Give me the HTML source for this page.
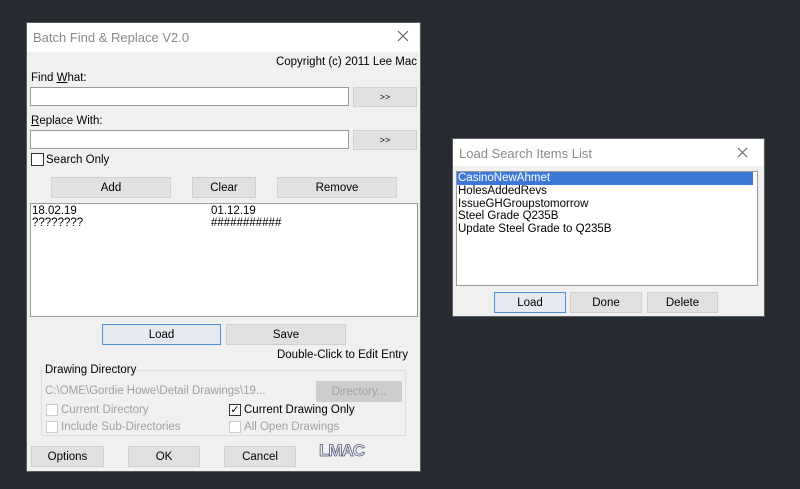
<!DOCTYPE html><html><head><style>
body{margin:0;width:800px;height:489px;background:#262a31;position:relative;overflow:hidden;font-family:"Liberation Sans",sans-serif;font-size:11.5px;color:#000}
.a{position:absolute}
.dlg{background:#f0f0f0;border:1px solid #5a5d62}
.tb{background:#fff;color:#8a8a8a;font-size:13px}
.btn{position:absolute;background:#e1e1e1;border:1px solid #d0d0d0;box-sizing:border-box;text-align:center;font-size:11.5px;display:flex;align-items:center;justify-content:center}
.btn.f{border:1px solid #4a90d9;background:#e5eaf0}
.in{position:absolute;background:#fff;border:1px solid #9a9a9a;box-sizing:border-box}
.cb{position:absolute;width:12px;height:12px;background:#fff;border:1px solid #333;box-sizing:border-box}
.cb.d{border-color:#ccc}
.g{color:#a0a0a0}
</style></head><body>
<div class="a dlg" style="left:26px;top:22px;width:393px;height:448px"></div>
<div class="a tb" style="left:27px;top:23px;width:392px;height:29px"></div>
<div class="a" style="left:33px;top:30px;font-size:13px;color:#8a8a8a">Batch Find &amp; Replace V2.0</div>
<svg class="a" style="left:397px;top:30px" width="12" height="12"><path d="M1 1L11 11M11 1L1 11" stroke="#666" stroke-width="1.2"/></svg>
<div class="a" style="right:383px;top:56px">Copyright (c) 2011 Lee Mac</div>
<div class="a" style="left:31px;top:72px">Find <u>W</u>hat:</div>
<div class="in" style="left:30px;top:87px;width:319px;height:19px"></div>
<div class="btn" style="left:353px;top:87px;width:64px;height:20px;font-size:9px">&gt;&gt;</div>
<div class="a" style="left:31px;top:115px"><u>R</u>eplace With:</div>
<div class="in" style="left:30px;top:130px;width:319px;height:19px"></div>
<div class="btn" style="left:353px;top:130px;width:64px;height:20px;font-size:9px">&gt;&gt;</div>
<div class="cb" style="left:31px;top:153px;width:13px;height:13px"></div>
<div class="a" style="left:46px;top:154px">Search Only</div>
<div class="btn" style="left:51px;top:177px;width:120px;height:21px">Add</div>
<div class="btn" style="left:192px;top:177px;width:64px;height:21px">Clear</div>
<div class="btn" style="left:277px;top:177px;width:120px;height:21px">Remove</div>
<div class="in" style="left:30px;top:203px;width:388px;height:114px"></div>
<div class="a" style="left:32px;top:205px">18.02.19</div>
<div class="a" style="left:211px;top:205px">01.12.19</div>
<div class="a" style="left:32px;top:217px">????????</div>
<div class="a" style="left:211px;top:217px">###########</div>
<div class="btn f" style="left:102px;top:324px;width:119px;height:21px">Load</div>
<div class="btn" style="left:226px;top:324px;width:120px;height:21px">Save</div>
<div class="a" style="right:392px;top:349px">Double-Click to Edit Entry</div>
<div class="a" style="left:41px;top:370px;width:365px;height:66px;border:1px solid #dcdcdc;box-sizing:border-box"></div>
<div class="a" style="left:44px;top:364px;background:#f0f0f0;padding:0 1px">Drawing Directory</div>
<div class="a g" style="left:45px;top:385px">C:\OME\Gordie Howe\Detail Drawings\19...</div>
<div class="btn g" style="left:316px;top:381px;width:86px;height:21px;background:#cdcdcd;border-color:#cdcdcd">Directory...</div>
<div class="cb d" style="left:46px;top:404px"></div><div class="a g" style="left:61px;top:404px">Current Directory</div>
<div class="cb" style="left:229px;top:404px;font-size:11px;line-height:10px;text-align:center">✓</div><div class="a" style="left:244px;top:404px">Current Drawing Only</div>
<div class="cb d" style="left:46px;top:421px"></div><div class="a g" style="left:61px;top:421px">Include Sub-Directories</div>
<div class="cb d" style="left:229px;top:421px"></div><div class="a g" style="left:244px;top:421px">All Open Drawings</div>
<div class="btn" style="left:31px;top:446px;width:73px;height:21px">Options</div>
<div class="btn" style="left:128px;top:446px;width:72px;height:21px">OK</div>
<div class="btn" style="left:224px;top:446px;width:72px;height:21px">Cancel</div>
<svg class="a" style="left:318px;top:440px" width="54" height="20"><text x="1" y="16" font-family="Liberation Sans" font-size="17" font-weight="bold" fill="#f0f0f0" stroke="#555a80" stroke-width="0.8" letter-spacing="-1">LMAC</text></svg>

<div class="a dlg" style="left:452px;top:138px;width:311px;height:177px"></div>
<div class="a tb" style="left:453px;top:139px;width:310px;height:27px"></div>
<div class="a" style="left:459px;top:146px;font-size:13px;color:#8a8a8a">Load Search Items List</div>
<svg class="a" style="left:737px;top:147px" width="11" height="11"><path d="M1 1L10 10M10 1L1 10" stroke="#666" stroke-width="1.2"/></svg>
<div class="in" style="left:456px;top:171px;width:302px;height:115px"></div>
<div class="a" style="left:457px;top:172px;width:296px;height:13px;background:#3c78d8"></div>
<div class="a" style="left:458px;top:172px;color:#fff;line-height:13px">CasinoNewAhmet</div>
<div class="a" style="left:458px;top:185px;line-height:12.5px">HolesAddedRevs<br>IssueGHGroupstomorrow<br>Steel Grade Q235B<br>Update Steel Grade to Q235B</div>
<div class="btn f" style="left:494px;top:292px;width:72px;height:21px">Load</div>
<div class="btn" style="left:570px;top:292px;width:72px;height:21px">Done</div>
<div class="btn" style="left:647px;top:292px;width:71px;height:21px">Delete</div>
</body></html>
